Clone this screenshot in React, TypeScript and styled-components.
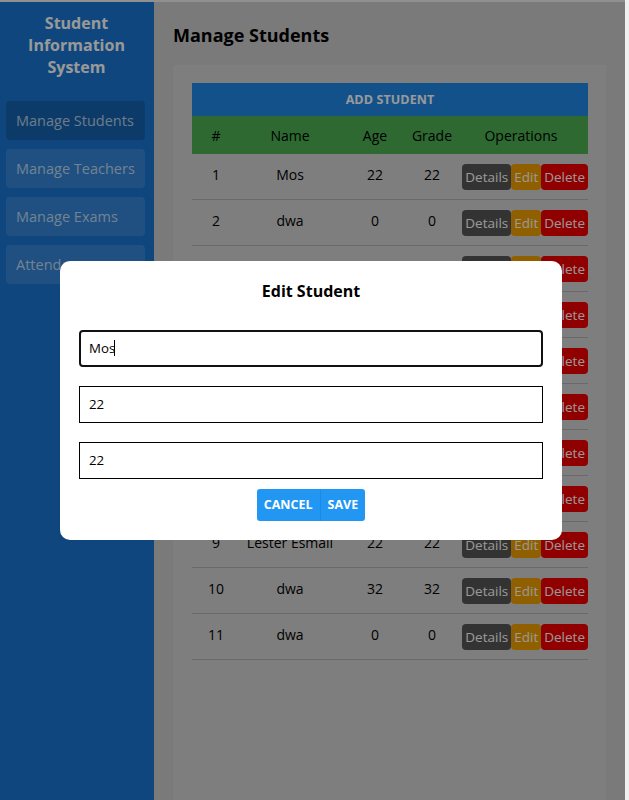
import React from "react";
import styled, { createGlobalStyle } from "styled-components";

const GlobalStyle = createGlobalStyle`
  html, body { margin: 0; padding: 0; background: #f0f0f0; }
  body { font-family: "Open Sans", "Noto Sans", "Liberation Sans", sans-serif; overflow: hidden; }
  * { box-sizing: border-box; }
`;

const Page = styled.div`
  width: 625px;
  padding-top: 2px;
  display: flex;
  min-height: 800px;
`;

const Sidebar = styled.aside`
  width: 154px;
  flex-shrink: 0;
  background: #1976d2;
  display: flex;
  flex-direction: column;
  padding: 10px 9px 0 6px;
`;

const Brand = styled.h1`
  margin: 0 0 23px;
  color: #ffffff;
  font-size: 16px;
  line-height: 22px;
  font-weight: 700;
  text-align: center;
  padding: 0 13px 0 15px;
`;

const NavList = styled.nav`
  display: flex;
  flex-direction: column;
  gap: 9px;
`;

const NavItem = styled.div<{ $active?: boolean }>`
  height: 39px;
  display: flex;
  align-items: center;
  padding-left: 10px;
  border-radius: 4px;
  font-size: 14.5px;
  color: rgba(255, 255, 255, 0.7);
  background: ${(p) => (p.$active ? "rgba(0,0,0,0.16)" : "rgba(255,255,255,0.12)")};
  white-space: nowrap;
  overflow: hidden;
`;

const Main = styled.main`
  flex: 1;
  background: #cccccc;
  padding: 20px 19px 0 19px;
  display: flex;
  flex-direction: column;
`;

const Heading = styled.h2`
  margin: 0 0 17px;
  font-size: 18px;
  line-height: 26px;
  font-weight: 700;
  color: #000;
`;

const Card = styled.section`
  background: #d3d3d3;
  padding: 18px 18px 0 19px;
  flex: 1;
  min-height: 740px;
`;

const AddBar = styled.div`
  height: 33px;
  background: #1e88e5;
  color: #ffffff;
  font-weight: 700;
  font-size: 12.5px;
  display: flex;
  align-items: center;
  justify-content: center;
  letter-spacing: 0.1px;
`;

const cols = "48px 100px 70px 44px 134px";

const HeadRow = styled.div`
  display: grid;
  grid-template-columns: ${cols};
  height: 38px;
  background: #4caf50;
  align-items: center;
  font-size: 14px;
  color: #000;
  text-align: center;
`;

const Row = styled.div`
  display: grid;
  grid-template-columns: ${cols};
  height: 46px;
  align-items: center;
  border-bottom: 1px solid #b0b0b0;
  font-size: 14px;
  color: #000;
  text-align: center;
`;

const Cell = styled.div<{ $shift?: number }>`
  white-space: nowrap;
  margin-top: ${(p) => p.$shift ?? -5}px;
`;

const Ops = styled.div`
  display: flex;
  justify-content: flex-end;
`;

const OpButton = styled.button<{ $kind: "details" | "edit" | "delete" }>`
  height: 26px;
  border: none;
  border-radius: 4px;
  padding: 0 3px;
  font-family: inherit;
  font-size: 13.5px;
  color: #ffffff;
  background: ${(p) =>
    p.$kind === "details" ? "#555555" : p.$kind === "edit" ? "#f0a000" : "#f00000"};
`;

const Overlay = styled.div`
  position: fixed;
  top: 0;
  left: 0;
  bottom: 0;
  right: 4px;
  padding-right: 3px;
  background: rgba(0, 0, 0, 0.4);
  display: flex;
  align-items: center;
  justify-content: center;
`;

const Modal = styled.div`
  width: 502px;
  background: #ffffff;
  border-radius: 10px;
  padding: 19px 19px 19px 19px;
  display: flex;
  flex-direction: column;
`;

const ModalTitle = styled.h3`
  margin: 0 0 28px;
  text-align: center;
  font-size: 16px;
  line-height: 22px;
  font-weight: 700;
  color: #000;
`;

const Field = styled.div<{ $focused?: boolean }>`
  height: 37px;
  border: ${(p) => (p.$focused ? "2px solid #111" : "1px solid #000")};
  border-radius: ${(p) => (p.$focused ? "4px" : "0")};
  display: flex;
  align-items: center;
  padding-left: ${(p) => (p.$focused ? "8px" : "9px")};
  margin-bottom: 19px;
  font-size: 13.3px;
  color: #000;
`;

const Caret = styled.span`
  display: inline-block;
  width: 1px;
  height: 16px;
  background: #000;
  margin-left: -1px;
`;

const ButtonGroup = styled.div`
  display: flex;
  justify-content: center;
  margin-top: -9px;
`;

const ActionButton = styled.button<{ $first?: boolean }>`
  height: 32px;
  border: none;
  background: #2196f3;
  color: #ffffff;
  font-family: inherit;
  font-weight: 700;
  font-size: 12.5px;
  padding: 0 7px;
  border-radius: ${(p) => (p.$first ? "3px 0 0 3px" : "0 3px 3px 0")};
  border-right: ${(p) => (p.$first ? "1px solid #1e88e5" : "none")};
`;

const students = [
  ["1", "Mos", "22", "22"],
  ["2", "dwa", "0", "0"],
  ["3", "dwa", "0", "0"],
  ["4", "dwa", "0", "0"],
  ["5", "dwa", "0", "0"],
  ["6", "dwa", "0", "0"],
  ["7", "dwa", "0", "0"],
  ["8", "dwa", "0", "0"],
  ["9", "Lester Esmail", "22", "22"],
  ["10", "dwa", "32", "32"],
  ["11", "dwa", "0", "0"],
];

export default function App() {
  return (
    <>
      <GlobalStyle />
      <Page>
        <Sidebar>
          <Brand>Student Information System</Brand>
          <NavList>
            <NavItem $active>Manage Students</NavItem>
            <NavItem>Manage Teachers</NavItem>
            <NavItem>Manage Exams</NavItem>
            <NavItem>Attendance</NavItem>
          </NavList>
        </Sidebar>
        <Main>
          <Heading>Manage Students</Heading>
          <Card>
            <AddBar>ADD STUDENT</AddBar>
            <HeadRow>
              <Cell $shift={0}>#</Cell>
              <Cell $shift={0}>Name</Cell>
              <Cell $shift={0}>Age</Cell>
              <Cell $shift={0}>Grade</Cell>
              <Cell $shift={0}>Operations</Cell>
            </HeadRow>
            {students.map((s) => (
              <Row key={s[0]}>
                <Cell>{s[0]}</Cell>
                <Cell>{s[1]}</Cell>
                <Cell>{s[2]}</Cell>
                <Cell>{s[3]}</Cell>
                <Ops>
                  <OpButton $kind="details">Details</OpButton>
                  <OpButton $kind="edit">Edit</OpButton>
                  <OpButton $kind="delete">Delete</OpButton>
                </Ops>
              </Row>
            ))}
          </Card>
        </Main>
      </Page>
      <Overlay>
        <Modal>
          <ModalTitle>Edit Student</ModalTitle>
          <Field $focused>
            Mos
            <Caret />
          </Field>
          <Field>22</Field>
          <Field>22</Field>
          <ButtonGroup>
            <ActionButton $first>CANCEL</ActionButton>
            <ActionButton>SAVE</ActionButton>
          </ButtonGroup>
        </Modal>
      </Overlay>
    </>
  );
}
